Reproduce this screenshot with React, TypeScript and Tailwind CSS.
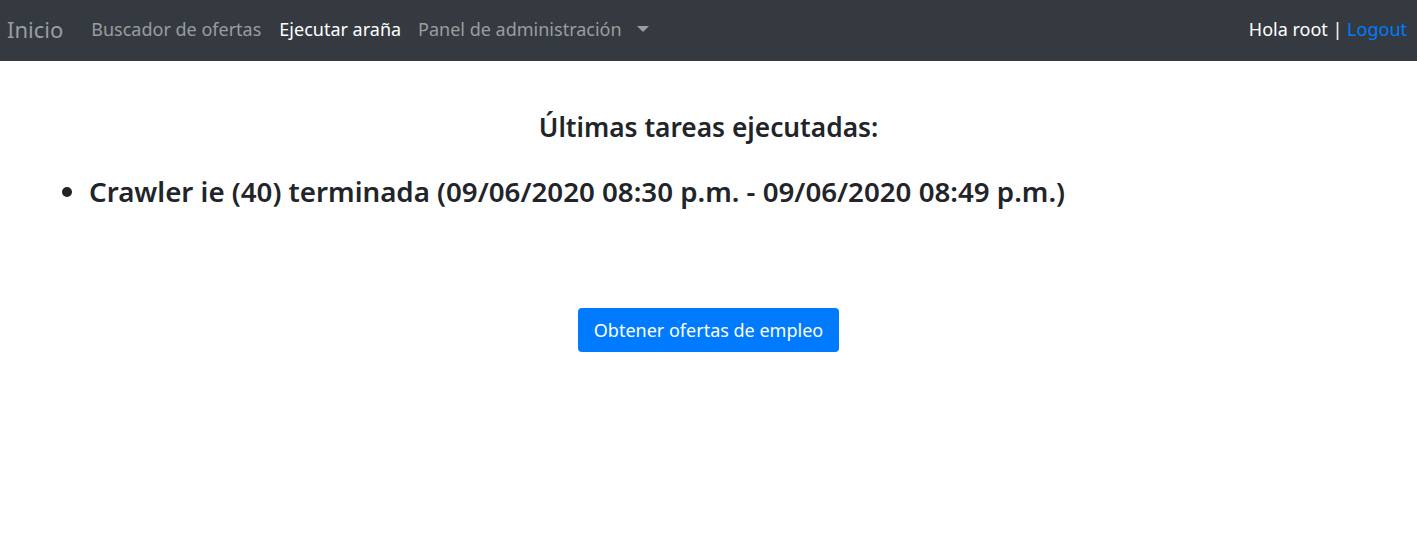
export default function App() {
  return (
    <div className="min-h-[556px] bg-white text-[#212529] font-['Noto_Sans',sans-serif]">
      {/* navbar */}
      <nav className="flex h-[61px] items-center bg-[#343a40] pb-[3px] pl-[7px] pr-[10px]">
        <a className="mr-[19px] text-[22px] text-[#9a9da0]">Inicio</a>
        <ul className="flex items-center text-[18px]">
          <li className="px-[9px] text-[#9a9da0]">Buscador de ofertas</li>
          <li className="pl-[9px] pr-[8px] text-white">Ejecutar araña</li>
          <li className="flex items-center px-[9px] text-[#9a9da0]">
            Panel de administración
            <span className="ml-[15px] inline-block border-x-[6px] border-t-[6px] border-x-transparent border-t-[#9a9da0]"></span>
          </li>
        </ul>
        <div className="ml-auto text-[18px] text-white">
          Hola root | <a className="text-[#007bff]">Logout</a>
        </div>
      </nav>

      {/* ───────────────────────────────────────────────────── */}
      <main className="pt-[50px]">
        <h4 className="text-center text-[26.3px] font-semibold leading-[1.25]">
          Últimas tareas ejecutadas:
        </h4>
        <ul className="ml-[49px] mt-[30px] list-disc pl-10">
          <li className="text-[27.7px] font-semibold leading-[1.25]">
            Crawler ie (40) terminada (09/06/2020 08:30 p.m. - 09/06/2020 08:49 p.m.)
          </li>
        </ul>
        <div className="mt-[100px] flex justify-center">
          <button className="h-[44px] rounded-[4px] bg-[#007bff] px-[16px] text-[18px] text-white">
            Obtener ofertas de empleo
          </button>
        </div>
      </main>
    </div>
  );
}
